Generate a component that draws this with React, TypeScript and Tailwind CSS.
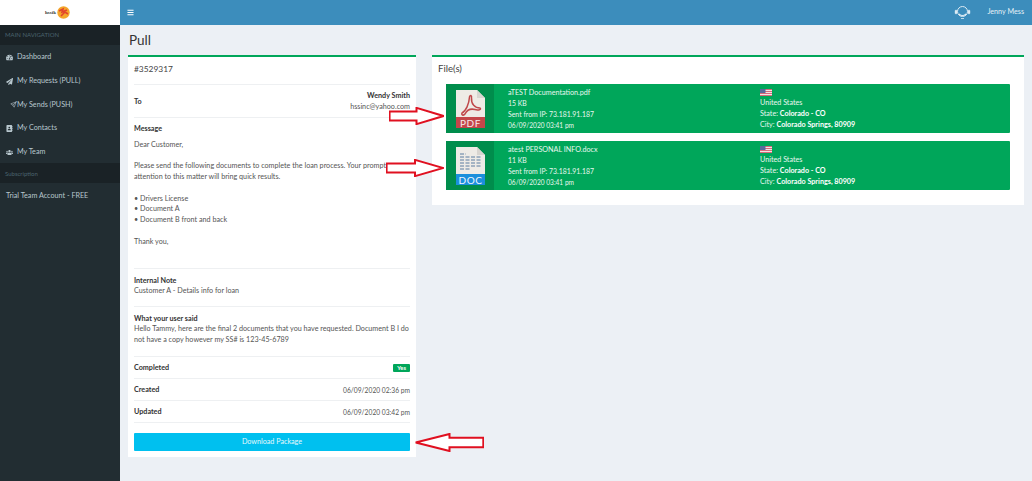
import React from 'react';
import { FaTachometerAlt, FaPaperPlane, FaAddressBook, FaUsers, FaBars } from 'react-icons/fa';
import { TbSend } from 'react-icons/tb';

const font = { fontFamily: 'Lato, "Liberation Sans", sans-serif' };

const NavItem = ({ icon, label, gap = 'gap-[4px]', pl = 'pl-[6px]' }: { icon: React.ReactNode; label: string; gap?: string; pl?: string }) => (
  <div className={`h-[23.8px] pt-[2px] flex items-center ${gap} ${pl} text-[7.2px] text-[#b8c7ce]`}>
    <span className="w-[7px] flex justify-center text-[7px]">{icon}</span>
    <span>{label}</span>
  </div>
);

const Arrow = ({ className, flip, head }: { className: string; flip?: boolean; head: number }) => (
  <svg className={`absolute ${className}`} viewBox="0 0 100 20" preserveAspectRatio="none" fill="white" stroke="#e01020" strokeWidth="2" style={flip ? { transform: 'scaleX(-1)' } : undefined}>
    <path d={`M1 5H${head}V1L99 10L${head} 19V15H1Z`} vectorEffect="non-scaling-stroke" />
  </svg>
);

const Divider = () => <div className="h-px bg-[#eef0f2]" />;

const PdfIcon = () => (
  <svg width="29" height="38" viewBox="0 0 29 38">
    <path d="M0 0H21L29 8V38H0Z" fill="#eeebe6" />
    <path d="M21 0L29 8H21Z" fill="#d8d5d0" />
    <path d="M6 23C10 21 13 14 13.5 7C14 4.5 16 5 15.5 8C15 14 19 18 24 18C26 19.5 22 20.5 19 19.5C15 18.5 11 20 9 24C7.5 26 5 25 6 23Z" fill="none" stroke="#c0474a" strokeWidth="1.5" />
    <rect y="27" width="29" height="11" fill="#c4464a" />
    <text x="14.5" y="36.5" textAnchor="middle" fontSize="10" fill="#f6e9e9" letterSpacing="0.6" fontFamily="Lato">PDF</text>
  </svg>
);

const DocIcon = () => (
  <svg width="29" height="38" viewBox="0 0 29 38">
    <path d="M0 0H21L29 8V38H0Z" fill="#eeebe6" />
    <path d="M21 0L29 8H21Z" fill="#d8d5d0" />
    <g stroke="#4a6f9a" strokeWidth="0.9" strokeDasharray="4 1.5">
      <path d="M4 7H10" />
      <path d="M4 10H25" />
      <path d="M4 13H25" />
      <path d="M4 16H25" />
      <path d="M4 19H25" />
      <path d="M4 22H14" />
    </g>
    <rect y="27" width="29" height="11" fill="#1b8fdc" />
    <text x="14.5" y="36.5" textAnchor="middle" fontSize="10" fill="#f0f6fc" letterSpacing="0.6" fontFamily="Lato">DOC</text>
  </svg>
);

const Flag = () => (
  <svg width="12" height="7" viewBox="0 0 12 7" className="block">
    <rect width="12" height="7" fill="#f3e3e6" />
    <g fill="#d8697c">
      <rect width="12" height="1" />
      <rect y="2" width="12" height="1" />
      <rect y="4" width="12" height="1" />
      <rect y="6" width="12" height="1" />
    </g>
    <rect width="5.5" height="4" fill="#5a6a9c" />
  </svg>
);

const FileBox = ({ icon, name, size }: { icon: React.ReactNode; name: string; size: string }) => (
  <div className="h-[49px] flex bg-[#00a65a] rounded-[1px] text-[7.2px] leading-[10.75px] text-[#e8f7ef]">
    <div className="w-[48px] bg-[#008d4c] flex items-center justify-center shrink-0">{icon}</div>
    <div className="w-[266px] pl-[14px] pt-[3.5px] shrink-0">
      <div>{name}</div>
      <div className="text-[6.9px]">{size}</div>
      <div className="text-[6.9px]">Sent from IP: 73.181.91.187</div>
      <div className="text-[6.6px]">06/09/2020 03:41 pm</div>
    </div>
    <div className="pt-[3.5px]">
      <div className="h-[10.75px] flex items-center"><Flag /></div>
      <div>United States</div>
      <div>State: <b className="text-white">Colorado - CO</b></div>
      <div>City: <b className="text-white">Colorado Springs, 80909</b></div>
    </div>
  </div>
);

const MetaRow = ({ label, children }: { label: string; children: React.ReactNode }) => (
  <div className="h-[21px] pt-[1px] flex items-center justify-between">
    <b className="text-[#333]">{label}</b>
    {children}
  </div>
);

export default function App() {
  return (
    <div className="relative w-[1032px] h-[481px] overflow-hidden flex bg-[#ecf0f5]" style={font}>
      <aside className="w-[120px] shrink-0 bg-[#222d32] flex flex-col">
        <div className="h-[24.5px] bg-white flex items-center justify-center gap-[1px] pr-[5px]">
          <span className="text-[5px] font-bold text-[#333]" style={{ fontFamily: '"Liberation Serif", serif' }}>hssik</span>
          <svg width="13" height="13" viewBox="0 0 13 13">
            <circle cx="6.5" cy="6.5" r="6.2" fill="#f4a62a" />
            <path d="M2 5L6 3L5 6L10 4M4 10L8 6L11 8" stroke="#e2452c" strokeWidth="1.6" fill="none" />
          </svg>
        </div>
        <div className="h-[20px] bg-[#1a2226] flex items-center pl-[5px] text-[6px] text-[#4b646f]">MAIN NAVIGATION</div>
        <NavItem icon={<FaTachometerAlt />} label="Dashboard" />
        <NavItem icon={<FaPaperPlane />} label="My Requests (PULL)" />
        <NavItem icon={<TbSend />} label="My Sends (PUSH)" gap="gap-0" pl="pl-[10px]" />
        <NavItem icon={<FaAddressBook />} label="My Contacts" />
        <NavItem icon={<FaUsers />} label="My Team" />
        <div className="h-[20px] bg-[#1a2226] flex items-center pl-[5px] text-[6px] text-[#4b646f]">Subscription</div>
        <div className="h-[24px] pt-[1px] flex items-center pl-[6px] text-[7.2px] text-[#b8c7ce]">Trial Team Account - FREE</div>
      </aside>

      <div className="flex-1 flex flex-col min-w-0">
        <header className="h-[24.5px] shrink-0 bg-[#3c8dbc] flex items-center justify-between pl-[7px] pr-[8px] text-white">
          <FaBars className="text-[7px]" />
          <div className="flex items-center gap-[16px]">
            <svg width="17" height="16" viewBox="0 0 17 16" fill="none" stroke="#dcebf4">
              <circle cx="8.5" cy="7.5" r="5" strokeWidth="1" />
              <path d="M5 10C7 12 10 12 12 10" strokeWidth="1.2" />
              <rect x="1" y="6" width="2" height="4" rx="1" fill="#dcebf4" strokeWidth="0.4" />
              <rect x="14" y="6" width="2" height="4" rx="1" fill="#dcebf4" strokeWidth="0.4" />
              <path d="M7 14.5H10" strokeWidth="0.8" />
            </svg>
            <span className="text-[7.2px] text-[#e6f0f6]">Jenny Mess</span>
          </div>
        </header>

        <div className="flex-1 min-h-0 pl-[8px] pr-[8px]">
          <h1 className="h-[30.5px] pl-[1px] flex items-center text-[13.5px] text-[#333]">Pull</h1>
          <div className="flex items-start gap-[16px]">
            <section className="w-[288px] h-[402px] shrink-0 bg-white border-t-2 border-[#00a65a] px-[6px] text-[7.2px] leading-[10.75px] text-[#555]">
              <div className="h-[27px] flex items-center text-[8.4px] text-[#444] pb-[3px]">#3529317</div>
              <Divider />
              <div className="h-[32px] pt-[2px] flex items-center justify-between">
                <b className="text-[#333]">To</b>
                <div className="text-right"><b className="text-[#333] block">Wendy Smith</b>hssinc@yahoo.com</div>
              </div>
              <Divider />
              <div className="pt-[6px] h-[150px]">
                <b className="text-[#333] block mb-[5px]">Message</b>
                <p>Dear Customer,</p>
                <p className="mt-[10.75px]">Please send the following documents to complete the loan process. Your prompt attention to this matter will bring quick results.</p>
                <p className="mt-[10.75px]">• Drivers License</p>
                <p>• Document A</p>
                <p>• Document B front and back</p>
                <p className="mt-[10.75px]">Thank you,</p>
              </div>
              <Divider />
              <div className="h-[37px] pt-[6.5px]">
                <b className="text-[#333] block">Internal Note</b>
                Customer A - Details info for loan
              </div>
              <Divider />
              <div className="h-[49px] pt-[6.5px]">
                <b className="text-[#333] block">What your user said</b>
                Hello Tammy, here are the final 2 documents that you have requested. Document B I do not have a copy however my SS# is 123-45-6789
              </div>
              <Divider />
              <MetaRow label="Completed">
                <span className="bg-[#00a65a] rounded-[1px] px-[4px] text-white text-[5.8px] leading-[8px] font-bold">Yes</span>
              </MetaRow>
              <Divider />
              <MetaRow label="Created"><span className="text-[6.7px]">06/09/2020 02:36 pm</span></MetaRow>
              <Divider />
              <MetaRow label="Updated"><span className="text-[6.7px]">06/09/2020 03:42 pm</span></MetaRow>
              <Divider />
              <button className="mt-[10px] w-full h-[18px] pt-[1px] bg-[#00c0ef] rounded-[1px] text-center text-[7.2px] text-[#e6f9fd]">Download Package</button>
            </section>

            <section className="flex-1 h-[150px] bg-white border-t-2 border-[#00a65a] px-[14px]">
              <div className="h-[27px] -mx-[14px] pl-[6px] pb-[3px] flex items-center text-[9.6px] text-[#444]">File(s)</div>
              <div className="flex flex-col gap-[8px]">
                <FileBox icon={<PdfIcon />} name="aTEST Documentation.pdf" size="15 KB" />
                <FileBox icon={<DocIcon />} name="atest PERSONAL INFO.docx" size="11 KB" />
              </div>
            </section>
          </div>
        </div>
      </div>

      <Arrow className="left-[389px] top-[107px] w-[55px] h-[18px]" head={50} />
      <Arrow className="left-[386px] top-[159px] w-[58px] h-[18px]" head={50} />
      <Arrow className="left-[415px] top-[433px] w-[69px] h-[19px]" head={50} flip />
    </div>
  );
}
